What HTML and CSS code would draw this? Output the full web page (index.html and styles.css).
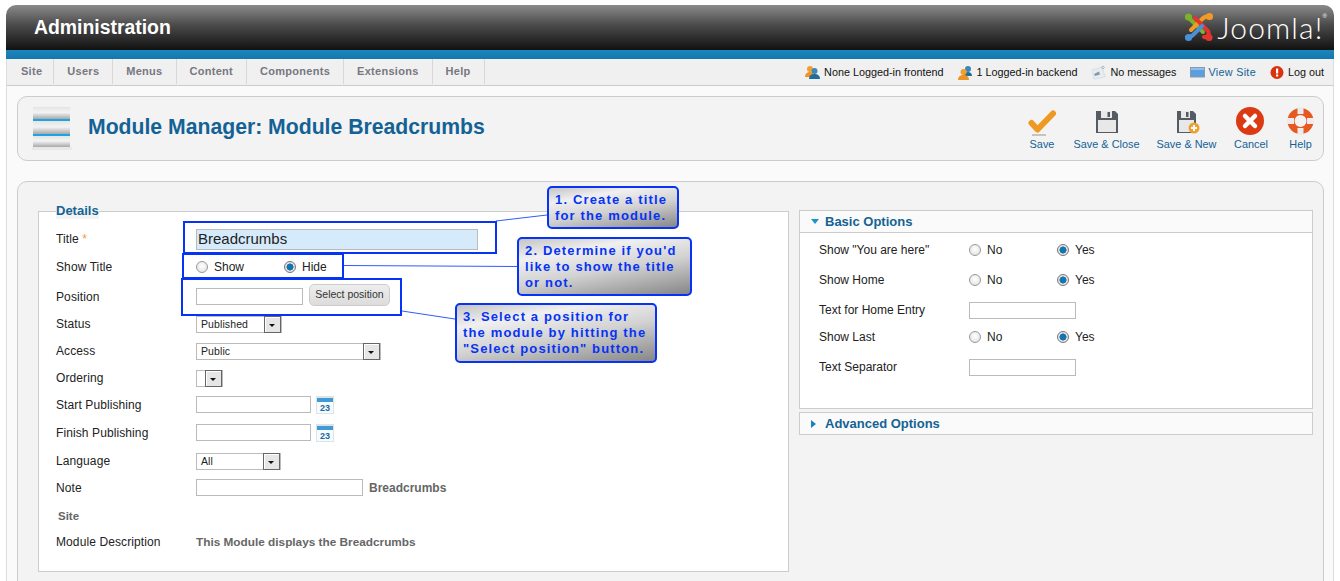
FILE: index.html
```html
<!DOCTYPE html>
<html lang="en">
<head>
<meta charset="utf-8">
<title>Module Manager: Module Breadcrumbs</title>
<link rel="stylesheet" href="styles.css">
</head>
<body>
<div class="page">
  <header class="header">
    <div class="brand">Administration</div>
    <div class="logo">
      <svg class="logo-mark" width="30" height="30" viewBox="0 0 30 30" fill="none" stroke-linecap="round" stroke-linejoin="round">
        <path d="M4 5 L8 9 L19 20" stroke="#7ab22c" stroke-width="4"/>
        <circle cx="4.500" cy="5" r="3.600" fill="#7ab22c"/>
        <path d="M26 5 C22 3 19 6 16 9 L7 18" stroke="#f39a24" stroke-width="4"/>
        <circle cx="25.500" cy="4.500" r="3.600" fill="#f39a24"/>
        <path d="M11 6 L24 19 C26 22 23 26 20 25" stroke="#e2352f" stroke-width="4"/>
        <circle cx="25" cy="25.500" r="3.600" fill="#e2352f"/>
        <path d="M18 14 L9 23 C7 25 6 25 5 25" stroke="#4a90d8" stroke-width="4"/>
        <circle cx="4.500" cy="25.500" r="3.600" fill="#4a90d8"/>
      </svg>
      <span class="logo-text">Joomla!</span><span class="logo-reg">®</span>
    </div>
  </header>
  <div class="band"></div>
  <nav class="menubar">
    <ul class="menu">
      <li class="menu-item">Site</li>
      <li class="menu-item">Users</li>
      <li class="menu-item">Menus</li>
      <li class="menu-item">Content</li>
      <li class="menu-item">Components</li>
      <li class="menu-item">Extensions</li>
      <li class="menu-item">Help</li>
    </ul>
    <div class="status">
      <span class="status-item">
        <svg width="15" height="15" viewBox="0 0 15 15"><circle cx="5" cy="4" r="3" fill="#f0a030"/><path d="M0 12 C0 8 3 7 5 7 C7 7 9 8 9 12Z" fill="#ee9422"/><circle cx="9.500" cy="6" r="3" fill="#3f87b5"/><path d="M4 14 C4 10 7 9 9.500 9 C12 9 15 10 15 14Z" fill="#1f6d9f"/></svg>
        None Logged-in frontend
      </span>
      <span class="status-item">
        <svg width="15" height="15" viewBox="0 0 15 15"><circle cx="10" cy="4" r="3" fill="#3f87b5"/><path d="M6 11 C6 8 8 7 10 7 C12 7 14 8 14 11Z" fill="#1f6d9f"/><circle cx="5.500" cy="7" r="3" fill="#f0a030"/><path d="M0 15 C0 11 3 10 5.500 10 C8 10 11 11 11 15Z" fill="#ee9422"/></svg>
        1 Logged-in backend
      </span>
      <span class="status-item">
        <svg width="15" height="15" viewBox="0 0 15 15"><path d="M1 5 L11 2 L14 12 L3 14Z" fill="#e8ecef" stroke="#cfd4d8" stroke-width=".6"/><path d="M3 9 L8 6.500 L9 9.500 L4 11Z" fill="#7d9bb0"/><circle cx="12" cy="2.500" r="1.200" fill="none" stroke="#8aa" stroke-width=".7"/></svg>
        No messages
      </span>
      <span class="status-item link">
        <svg width="15" height="12" viewBox="0 0 15 12"><rect x=".5" y="1.500" width="14" height="9.500" fill="#5c9fe0" stroke="#8d9aa8"/><rect x="1" y="2" width="13" height="2" fill="#8cc0ee"/></svg>
        View Site
      </span>
      <span class="status-item last">
        <svg width="14" height="15" viewBox="0 0 14 15"><circle cx="7" cy="7.500" r="6.500" fill="#d8320e"/><rect x="6" y="3.500" width="2.200" height="5" fill="#fff"/><rect x="6" y="9.500" width="2.200" height="2" fill="#fff"/></svg>
        Log out
      </span>
    </div>
  </nav>
  <main class="content">
    <section class="toolbar-box">
      <div class="page-title">
        <svg class="title-icon" width="42" height="44" viewBox="0 0 42 44">
          <defs>
            <linearGradient id="disc" x1="0" y1="0" x2="0" y2="1"><stop offset="0" stop-color="#e4e4e4"/><stop offset=".45" stop-color="#f4f4f4"/><stop offset="1" stop-color="#a8a8a8"/></linearGradient>
          </defs>
          <rect x="1" y="0" width="37" height="12" fill="url(#disc)"/>
          <rect x="1" y="12" width="37" height="2" fill="#1ba5e4"/>
          <rect x="1" y="14" width="37" height="13" fill="url(#disc)"/>
          <rect x="1" y="27" width="37" height="2" fill="#1ba5e4"/>
          <rect x="1" y="29" width="37" height="11" fill="url(#disc)"/>
          <rect x="0" y="40" width="40" height="3" fill="#e8e8e8"/>
        </svg>
        <h1 class="title">Module Manager: Module Breadcrumbs</h1>
      </div>
      <div class="toolbar">
        <div class="tool tool-save">
          <svg width="32" height="30" viewBox="0 0 32 30" fill="none"><path d="M5.500 16 L11.500 22.500 L27 6.500" stroke="#ee9a22" stroke-width="6" stroke-linecap="round" stroke-linejoin="round"/><rect x="6" y="27" width="14" height="2" fill="#c9c4bb"/></svg>
          <span>Save</span>
        </div>
        <div class="tool tool-close">
          <svg width="32" height="30" viewBox="0 0 32 30"><path d="M5 4 H24 L27 7 V26 H5Z" fill="#555b63"/><rect x="10" y="4" width="11" height="7" fill="#e9e9e9"/><rect x="16.500" y="5" width="2.500" height="5" fill="#555b63"/><rect x="7" y="13" width="18" height="12" fill="#e8e8e8"/></svg>
          <span>Save &amp; Close</span>
        </div>
        <div class="tool tool-new">
          <svg width="32" height="30" viewBox="0 0 32 30"><path d="M6 4 H22 L25 7 V26 H6Z" fill="#555b63"/><rect x="10" y="4" width="9" height="7" fill="#e9e9e9"/><rect x="15" y="5" width="2.500" height="5" fill="#555b63"/><rect x="8" y="13" width="15" height="12" fill="#e8e8e8"/><circle cx="23" cy="21" r="5.500" fill="#f0a030"/><path d="M23 18 V24 M20 21 H26" stroke="#fff" stroke-width="2"/></svg>
          <span>Save &amp; New</span>
        </div>
        <div class="tool tool-cancel">
          <svg width="32" height="30" viewBox="0 0 32 30"><circle cx="15" cy="14" r="14" fill="#dc3a12"/><path d="M10 9 L20 19 M20 9 L10 19" stroke="#fff" stroke-width="4.500" stroke-linecap="round"/></svg>
          <span>Cancel</span>
        </div>
        <div class="tool tool-help">
          <svg width="32" height="30" viewBox="0 0 32 30" fill="none"><circle cx="15.500" cy="14" r="9.500" stroke="#e65a22" stroke-width="7"/><path d="M15.500 0 V7 M15.500 21 V28 M2 14 H9 M22 14 H29" stroke="#ececec" stroke-width="6"/></svg>
          <span>Help</span>
        </div>
      </div>
    </section>

    <section class="main-box">
      <fieldset class="details">
        <legend class="details-legend">Details</legend>
        <div class="row row-first"><label class="lab">Title <em class="req">*</em></label><div class="title-input">Breadcrumbs</div></div>
        <div class="row">
          <label class="lab">Show Title</label>
          <div class="radios radios-left">
            <span class="opt"><i class="radio"></i>Show</span>
            <span class="opt"><i class="radio on"></i>Hide</span>
          </div>
        </div>
        <div class="row gap3">
          <label class="lab">Position</label>
          <div class="input w107"></div>
          <div class="btn">Select position</div>
        </div>
        <div class="row"><label class="lab">Status</label><div class="select w86">Published<i class="arrow"></i></div></div>
        <div class="row"><label class="lab">Access</label><div class="select w185">Public<i class="arrow"></i></div></div>
        <div class="row"><label class="lab">Ordering</label><div class="select w27"><i class="arrow"></i></div></div>
        <div class="row"><label class="lab">Start Publishing</label><div class="input w115"></div>
          <svg class="cal" width="18" height="18" viewBox="0 0 18 18"><rect width="18" height="18" fill="#dfe3e6"/><rect x="1" y="2" width="16" height="15" fill="#f6fbff"/><rect x="1" y="2" width="16" height="4" fill="#3f9ad6"/><text x="9" y="15" class="cal-num" text-anchor="middle">23</text></svg>
        </div>
        <div class="row gap1"><label class="lab">Finish Publishing</label><div class="input w115"></div>
          <svg class="cal" width="18" height="18" viewBox="0 0 18 18"><rect width="18" height="18" fill="#dfe3e6"/><rect x="1" y="2" width="16" height="15" fill="#f6fbff"/><rect x="1" y="2" width="16" height="4" fill="#3f9ad6"/><text x="9" y="15" class="cal-num" text-anchor="middle">23</text></svg>
        </div>
        <div class="row gap1"><label class="lab">Language</label><div class="select w85">All<i class="arrow"></i></div></div>
        <div class="row"><label class="lab">Note</label><div class="input w167"></div><span class="note">Breadcrumbs</span></div>
        <div class="row gap1"><span class="site">Site</span></div>
        <div class="row gapn1"><label class="lab">Module Description</label><span class="desc">This Module displays the Breadcrumbs</span></div>
      </fieldset>

      <aside class="side">
        <div class="panel">
          <h3 class="panel-head"><i class="tri-down"></i>Basic Options</h3>
          <div class="panel-body">
            <div class="opt-row"><label class="opt-lab">Show "You are here"</label><div class="radios"><span class="opt"><i class="radio"></i>No</span><span class="opt"><i class="radio on"></i>Yes</span></div></div>
            <div class="opt-row"><label class="opt-lab">Show Home</label><div class="radios"><span class="opt"><i class="radio"></i>No</span><span class="opt"><i class="radio on"></i>Yes</span></div></div>
            <div class="opt-row"><label class="opt-lab">Text for Home Entry</label><div class="input w107"></div></div>
            <div class="opt-row tight"><label class="opt-lab">Show Last</label><div class="radios"><span class="opt"><i class="radio"></i>No</span><span class="opt"><i class="radio on"></i>Yes</span></div></div>
            <div class="opt-row"><label class="opt-lab">Text Separator</label><div class="input w107"></div></div>
          </div>
        </div>
        <div class="panel panel-closed">
          <h3 class="panel-head closed"><i class="tri-right"></i>Advanced Options</h3>
        </div>
      </aside>
    </section>
  </main>

  <div class="annotations">
    <svg class="leaders" width="1340" height="581" viewBox="0 0 1340 581" fill="none" stroke="#2f5cff">
      <path d="M496 221 L547 215"/>
      <path d="M344 265.500 L517 266.500"/>
      <path d="M402 311 L455 319"/>
    </svg>
    <div class="mark mark-1"></div>
    <div class="mark mark-2"></div>
    <div class="mark mark-3"></div>
    <div class="callout call-1">1. Create a title<br>for the module.</div>
    <div class="callout call-2">2. Determine if you'd<br>like to show the title<br>or not.</div>
    <div class="callout call-3">3. Select a position for<br>the module by hitting the<br>"Select position" button.</div>
  </div>
</div>
</body>
</html>
```
FILE: styles.css
```css
* { box-sizing: border-box; }
html, body { margin: 0; padding: 0; height: 581px; overflow: hidden; background: #fff; }
body { font-family: "Liberation Sans", Arial, sans-serif; font-size: 12px; color: #222; }
.page { position: relative; width: 1340px; height: 581px; padding: 5px 6px 0; overflow: hidden; }

.header { height: 45px; border-radius: 10px 10px 0 0; background: linear-gradient(#8a8a8a, #4a4a4a 45%, #111 100%); display: flex; justify-content: space-between; padding: 0 7px 0 28px; }
.brand { color: #fff; font-size: 19.4px; font-weight: bold; line-height: 44px; }
.logo { display: flex; align-items: flex-start; color: #fff; padding-top: 7px; }
.logo-mark { margin-right: 3px; }
.logo-text { font-family: Lato, sans-serif; font-weight: 300; font-size: 30px; line-height: 30px; letter-spacing: 1.15px; }
.logo-reg { font-size: 6px; line-height: 8px; margin-left: -1px; }
.band { height: 9px; background: linear-gradient(#1b86bd, #1577ab); }

.menubar { height: 27px; background: #f0f0f0; border-bottom: 1px solid #ccc; border-left: 1px solid #ddd; border-right: 1px solid #ddd; display: flex; justify-content: space-between; }
.menu { list-style: none; margin: 0; padding: 0; display: flex; }
.menu-item { padding: 0 13px; border-right: 1px solid #d8d8d8; font-size: 11px; font-weight: bold; color: #77777f; letter-spacing: .28px; line-height: 25px; height: 25px; }
.menu-item:first-child { padding-left: 14px; padding-right: 11px; }
.status { display: flex; align-items: center; font-size: 10.8px; color: #111; height: 26px; }
.status-item { display: flex; align-items: center; gap: 4px; margin-right: 14px; }
.status-item.last { margin-right: 9px; }
.status-item.link { color: #146295; letter-spacing: .3px; gap: 3px; }

.content { background: #fafafa; border-left: 1px solid #ddd; border-right: 1px solid #ddd; height: 496px; padding: 10px 9px 0 10px; }
.toolbar-box { height: 65px; border: 1px solid #ccc; border-radius: 10px; background: #f3f3f3; display: flex; justify-content: space-between; }
.page-title { display: flex; align-items: center; padding-left: 14px; }
.title-icon { margin-right: 14px; }
.title { margin: 0 0 4px; font-size: 21.2px; font-weight: bold; color: #146295; }
.toolbar { display: flex; padding: 10px 0 0 0; }
.tool { display: flex; flex-direction: column; align-items: center; font-size: 10.9px; color: #146295; }
.tool svg { display: block; margin-bottom: 1px; height: 30px; }
.tool span { display: block; line-height: 13px; }
.tool-save { width: 44px; }
.tool-close { width: 85px; }
.tool-new { width: 75px; }
.tool-cancel { width: 54px; }
.tool-help { width: 45px; }

.main-box { margin-top: 20px; height: 440px; border: 1px solid #ccc; border-radius: 10px; background: #f3f3f3; padding: 21px 10px 0 20px; display: flex; gap: 10px; align-items: flex-start; }
.details { width: 751px; height: 369px; margin: 0; padding: 0 17px; border: 1px solid #ccc; background: #fff; }
.details-legend { padding: 0; color: #146295; font-size: 13px; font-weight: bold; line-height: 16px; margin-left: 0; background: #f3f3f3; }
.row { display: flex; align-items: center; height: 27px; }
.row-first { margin-top: 6px; height: 28px; }
.gap3 { margin-top: 3px; }
.gap1 { margin-top: 1px; }
.gapn1 { margin-top: -1px; }
.lab { width: 140px; flex: none; letter-spacing: .1px; }
.req { color: #f59a3a; font-style: normal; }
.title-input { width: 282px; height: 21px; border: 1px solid #bbb; background: #d5ebfb; font-size: 15px; line-height: 18px; padding-left: 1px; color: #222; }
.input { height: 17px; border: 1px solid #bbb; background: #fff; flex: none; }
.w107 { width: 107px; }
.w115 { width: 115px; }
.w167 { width: 167px; }
.btn { margin-left: 6px; margin-top: -3px; width: 81px; height: 22px; border: 1px solid #ccc; border-radius: 5px; background: linear-gradient(#eee, #dcdcdc); font-size: 10.5px; line-height: 19px; text-align: center; color: #333; }
.select { position: relative; height: 17px; margin-top: 2px; border: 1px solid #bbb; background: #fff; font-size: 10.5px; line-height: 15px; padding-left: 4px; flex: none; letter-spacing: .1px; }
.w86 { width: 86px; }
.w85 { width: 85px; }
.w185 { width: 185px; }
.w27 { width: 27px; }
.arrow { position: absolute; right: 0; top: -1px; width: 17px; height: 17px; border: 1px solid #666; background: #e6e6e6; box-shadow: inset 1px 1px 0 #fff; }
.arrow::after { content: ""; position: absolute; left: 4px; top: 7px; border: 3.5px solid transparent; border-top: 3.5px solid #111; border-bottom: 0; }
.cal { margin-left: 5px; }
.cal-num { font-family: "Liberation Sans", sans-serif; font-size: 9px; font-weight: bold; fill: #1a6aa0; }
.note { margin-left: 6px; font-weight: bold; color: #666; }
.site { margin-left: 2px; color: #666; font-weight: bold; font-size: 11.5px; }
.desc { font-weight: bold; color: #666; font-size: 11.8px; }

.radios { display: flex; }
.opt { display: flex; align-items: center; width: 88px; gap: 6px; }
.radio { display: block; width: 12px; height: 12px; border-radius: 50%; border: 1px solid #999; background: radial-gradient(circle at 50% 40%, #fff, #ddd); flex: none; }
.radio.on { border-color: #777; background: radial-gradient(circle, #0f78b4 0 3px, #1a4a68 3.3px, #e6e6e6 3.7px, #ddd 100%); }

.side { width: 514px; padding-top: 7px; }
.panel { border: 1px solid #ccc; background: #fff; height: 199px; }
.panel-closed { height: 23px; margin-top: 3px; background: #fafafa; }
.panel-head { margin: 0; height: 22px; border-bottom: 1px solid #ccc; background: #fafafa; color: #146295; font-size: 13px; font-weight: bold; line-height: 21px; padding-left: 11px; display: flex; align-items: center; }
.panel-head.closed { height: 21px; border-bottom: 0; }
.tri-down { width: 0; height: 0; border: 4.5px solid transparent; border-top: 5px solid #1a95c8; border-bottom: 0; margin-right: 6px; }
.tri-right { width: 0; height: 0; border: 4.5px solid transparent; border-left: 5px solid #1a80b8; border-right: 0; margin-right: 9px; }
.panel-body { padding: 2px 0 0 19px; }
.opt-row { display: flex; align-items: center; height: 30px; }
.opt-row.tight { height: 24px; }
.opt-row:nth-child(5) { margin-top: 3px; }
.opt-lab { width: 150px; flex: none; }

.annotations { position: absolute; inset: 0; pointer-events: none; }
.leaders { position: absolute; left: 0; top: 0; }
.mark { position: absolute; border: 2px solid #0633f5; }
.mark-1 { left: 183px; top: 221px; width: 314px; height: 33px; }
.mark-2 { left: 182px; top: 253px; width: 162px; height: 26px; }
.mark-3 { left: 181px; top: 278px; width: 221px; height: 38px; }
.callout { position: absolute; border: 2px solid #0633f5; border-radius: 5px; background: linear-gradient(170deg, #c4c4c4 0%, #f0f0f0 25%, #d2d2d2 55%, #868686 100%); color: #0633f5; font-size: 13px; font-weight: bold; letter-spacing: 1.15px; line-height: 16px; white-space: nowrap; padding: 4px 6px; }
.call-1 { left: 547px; top: 186px; width: 132px; height: 43px; }
.call-2 { left: 517px; top: 237px; width: 175px; height: 59px; }
.call-3 { left: 455px; top: 303px; width: 202px; height: 60px; }
```
